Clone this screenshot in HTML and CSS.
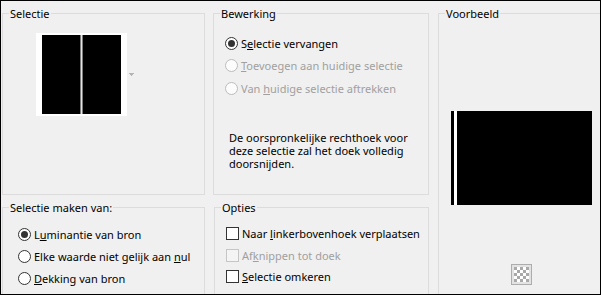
FILE: index.html
```html
<!DOCTYPE html>
<html lang="nl">

<head>
    <meta charset="UTF-8">
    <title>Selectie uit masker</title>
    <link rel="stylesheet" href="styles.css">
</head>

<body>
    <div class="dialog">
        <fieldset class="group">
            <legend>Selectie</legend>
            <div class="sel-body">
                <div class="thumb">
                    <span class="half"></span>
                    <span class="split"></span>
                    <span class="half"></span>
                </div>
                <svg class="drop" width="5" height="3" viewBox="0 0 5 3">
                    <rect x="0" y="0" width="5" height="1" fill="#b4b4b4" />
                    <rect x="1" y="1" width="3" height="1" fill="#b4b4b4" />
                    <rect x="2" y="2" width="1" height="1" fill="#b4b4b4" />
                </svg>
            </div>
        </fieldset>

        <fieldset class="group">
            <legend>Bewerking</legend>
            <div class="edit-body">
                <div class="row"><span class="radio on"></span><span class="label">S<u>e</u>lectie vervangen</span></div>
                <div class="row disabled"><span class="radio"></span><span class="label"><u>T</u>oevoegen aan huidige selectie</span></div>
                <div class="row disabled"><span class="radio"></span><span class="label">Van <u>h</u>uidige selectie aftrekken</span></div>
                <p class="note">De oorspronkelijke rechthoek voor<br>deze selectie zal het doek volledig<br>doorsnijden.</p>
            </div>
        </fieldset>

        <fieldset class="group group-preview">
            <legend>Voorbeeld</legend>
            <div class="preview-body">
                <div class="preview"><span class="stripe"></span></div>
                <svg class="checker" width="21" height="21" viewBox="0 0 21 21">
                    <defs>
                        <pattern id="ck" x="3" y="3" width="6" height="6" patternUnits="userSpaceOnUse">
                            <rect width="3" height="3" fill="#a9a9a9" />
                            <rect x="3" y="3" width="3" height="3" fill="#a9a9a9" />
                        </pattern>
                    </defs>
                    <rect x="0.5" y="0.5" width="20" height="20" fill="#e3e3e3" stroke="#adadad" />
                    <rect x="3" y="3" width="15" height="15" fill="#fff" />
                    <rect x="3" y="3" width="15" height="15" fill="url(#ck)" />
                </svg>
            </div>
        </fieldset>

        <fieldset class="group">
            <legend>Selectie maken van:</legend>
            <div class="source-body">
                <div class="row"><span class="radio on"></span><span class="label">L<u>u</u>minantie van bron</span></div>
                <div class="row"><span class="radio"></span><span class="label">Elke waarde niet gelijk aan <u>n</u>ul</span></div>
                <div class="row"><span class="radio"></span><span class="label"><u>D</u>ekking van bron</span></div>
            </div>
        </fieldset>

        <fieldset class="group group-options">
            <legend>Opties</legend>
            <div class="options-body">
                <div class="row"><span class="check"></span><span class="label">Naar <u>l</u>inkerbovenhoek verplaatsen</span></div>
                <div class="row disabled"><span class="check"></span><span class="label">Af<u>k</u>nippen tot doek</span></div>
                <div class="row"><span class="check"></span><span class="label"><u>S</u>electie omkeren</span></div>
            </div>
        </fieldset>
    </div>
</body>

</html>
```

FILE: styles.css
```css
/* dialoog basis */
body {
    margin: 0;
    font-family: "Noto Sans", "Liberation Sans", sans-serif;
    font-size: 11px;
    color: #000;
}

.dialog {
    width: 601px;
    height: 295px;
    box-sizing: border-box;
    border: 1px solid #000;
    background-color: #f0f0f0;
    overflow: hidden;
    padding: 5px 0 0 1px;
    display: grid;
    grid-template-columns: 203px 216px 170px;
    grid-template-rows: 189px 120px;
    column-gap: 8px;
    row-gap: 5px;
}

/* groepskaders */
.group {
    margin: 0;
    padding: 0;
    min-width: 0;
    border: 1px solid #dcdcdc;
}

.group legend {
    margin-left: 6px;
    padding: 0 1px;
    line-height: 15px;
}

.group-preview {
    grid-row: span 2;
    margin-left: 1px;
    height: 320px;
}

.group-options {
    margin-left: 1px;
}

/* rijen met keuzerondjes en vakjes */
.row {
    display: flex;
    align-items: center;
    white-space: nowrap;
}

.label {
    margin-left: 3px;
}

.label u {
    text-underline-offset: 1px;
}

.disabled {
    color: #a0a0a0;
}

.radio {
    width: 13px;
    height: 13px;
    box-sizing: border-box;
    border: 1px solid #333;
    border-radius: 50%;
    background-color: #fff;
    display: flex;
    align-items: center;
    justify-content: center;
    flex: none;
}

.radio.on::after {
    content: "";
    width: 7px;
    height: 7px;
    border-radius: 50%;
    background-color: #333;
}

.disabled .radio {
    border-color: #bcbcbc;
    background-color: #fcfcfc;
}

.check {
    width: 13px;
    height: 13px;
    box-sizing: border-box;
    border: 1px solid #333;
    background-color: #fff;
    flex: none;
}

.disabled .check {
    border-color: #c6c6c6;
    background-color: #f4f4f4;
}

/* Selectie */
.sel-body {
    display: flex;
    align-items: flex-start;
    padding: 12px 0 0 33px;
}

.thumb {
    display: flex;
    background-color: #fff;
    padding: 2px 6px;
}

.half {
    width: 38px;
    height: 79px;
    background-color: #000;
}

.split {
    width: 1px;
    background-color: #e4e4e4;
    border-left: 1px solid #7c7c7c;
    border-right: 1px solid #7c7c7c;
}

.drop {
    display: block;
    margin: 40px 0 0 2px;
}

/* Bewerking */
.edit-body {
    padding: 11px 0 0 11px;
}

.edit-body .row {
    height: 22.5px;
}

.note {
    margin: 31px 0 0 4px;
    line-height: 13px;
    white-space: nowrap;
}

/* Voorbeeld */
.preview-body {
    display: flex;
    flex-direction: column;
    align-items: center;
    width: 141px;
    padding: 90px 0 0 12px;
}

.preview {
    width: 141px;
    height: 94px;
    background-color: #000;
}

.stripe {
    display: block;
    width: 3px;
    height: 100%;
    margin-left: 3px;
    background-color: #fff;
}

.checker {
    display: block;
    margin-top: 59px;
}

/* onderste groepen */
.source-body {
    padding: 8px 0 0 15px;
}

.source-body .row {
    height: 22px;
}

.options-body {
    padding: 8px 0 0 11px;
}

.options-body .row {
    height: 21.5px;
}
```
